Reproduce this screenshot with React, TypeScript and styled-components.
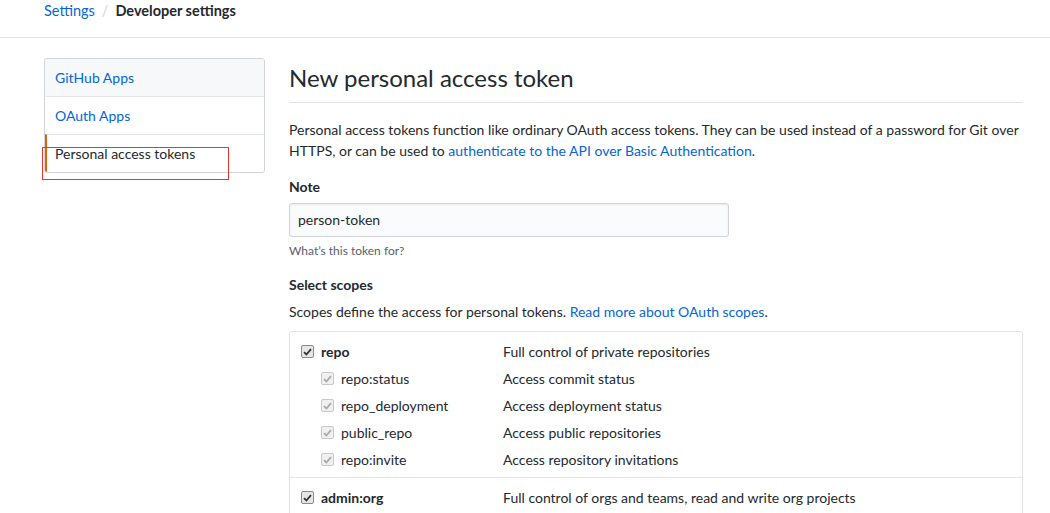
import React from "react";
import styled, { createGlobalStyle } from "styled-components";

const Global = createGlobalStyle`
  html, body { margin: 0; padding: 0; background: #fff; }
  body {
    font-family: "Segoe UI", Lato, "Liberation Sans", sans-serif;
    font-size: 14px;
    line-height: 1.5;
    color: #24292e;
    overflow: hidden;
  }
  * { box-sizing: border-box; }
`;

const Page = styled.div`
  width: 1050px;
  height: 513px;
  position: relative;
  overflow: hidden;
`;

const Header = styled.div`
  height: 38px;
  border-bottom: 1px solid #e1e4e8;
  padding-left: 44px;
  display: flex;
  align-items: flex-start;
`;

const Crumbs = styled.div`
  display: flex;
  align-items: center;
  font-size: 14.5px;
  line-height: 22px;
`;

const Crumb = styled.a<{ $current?: boolean }>`
  color: ${(p) => (p.$current ? "#24292e" : "#0366d6")};
  font-weight: ${(p) => (p.$current ? 700 : 400)};
  text-decoration: none;
`;

const Sep = styled.span`
  color: #d1d5da;
  margin: 0 7px;
`;

const Body = styled.div`
  display: flex;
  gap: 24px;
  padding: 20px 0 0 44px;
`;

const SideNav = styled.nav`
  width: 221px;
  flex: none;
  border: 1px solid #d1d5da;
  border-radius: 3px;
  align-self: flex-start;
  overflow: hidden;
`;

const NavItem = styled.a<{ $selected?: boolean; $hover?: boolean }>`
  display: block;
  height: 38px;
  line-height: 37px;
  padding: 0 8px;
  font-size: 14px;
  text-decoration: none;
  color: ${(p) => (p.$selected ? "#24292e" : "#0366d6")};
  background: ${(p) => (p.$hover ? "#f6f8fa" : "#fff")};
  border-top: 1px solid #e1e4e8;
  border-left: 2px solid ${(p) => (p.$selected ? "#e36209" : "transparent")};
  &:first-child { border-top: 0; height: 37px; }
`;

const Main = styled.main`
  width: 734px;
  flex: none;
`;

const Title = styled.h2`
  margin: 0;
  font-size: 24px;
  font-weight: 400;
  line-height: 36px;
  padding: 2px 0 6px;
  border-bottom: 1px solid #e1e4e8;
`;

const Lead = styled.p`
  margin: 16px 0 0;
  font-size: 14px;
  line-height: 21px;
`;

const Link = styled.a`
  color: #0366d6;
  text-decoration: none;
`;

const Label = styled.div<{ $gap: number }>`
  margin-top: ${(p) => p.$gap}px;
  font-weight: 700;
  line-height: 21px;
`;

const Input = styled.div`
  margin-top: 6px;
  width: 440px;
  height: 34px;
  border: 1px solid #d1d5da;
  border-radius: 3px;
  background: #fafbfc;
  box-shadow: inset 0 1px 2px rgba(27, 31, 35, 0.075);
  padding: 0 8px;
  line-height: 32px;
  font-size: 14px;
`;

const Hint = styled.div`
  margin-top: 5px;
  font-size: 12px;
  color: #586069;
  line-height: 18px;
`;

const Note = styled.p`
  margin: 6px 0 0;
  line-height: 21px;
`;

const ScopeBox = styled.div`
  margin-top: 9px;
  border: 1px solid #e1e4e8;
  border-radius: 3px;
`;

const Group = styled.div`
  padding: 6px 0 4px 11px;
  & + & { border-top: 1px solid #e1e4e8; }
`;

const Row = styled.div<{ $sub?: boolean }>`
  display: flex;
  align-items: center;
  height: 27px;
  padding-left: ${(p) => (p.$sub ? "20px" : "0")};
`;

const Name = styled.span<{ $sub?: boolean }>`
  width: ${(p) => (p.$sub ? "162px" : "182px")};
  font-weight: ${(p) => (p.$sub ? 400 : 700)};
  margin-left: 7px;
`;

const Desc = styled.span`
  color: #24292e;
`;

const Box = styled.span<{ $disabled?: boolean }>`
  width: 13px;
  height: 13px;
  flex: none;
  border: 1px solid ${(p) => (p.$disabled ? "#c8c8c8" : "#8a8a8a")};
  border-radius: 2px;
  background: ${(p) => (p.$disabled ? "#f0f0f0" : "#e6e6e6")};
  display: inline-flex;
  align-items: center;
  justify-content: center;
`;

const Check = ({ disabled }: { disabled?: boolean }) => (
  <Box $disabled={disabled}>
    <svg width="9" height="8" viewBox="0 0 9 8">
      <path
        d="M1 4.2 L3.4 6.5 L8 1.2"
        fill="none"
        stroke={disabled ? "#a9a9a9" : "#333"}
        strokeWidth="1.8"
      />
    </svg>
  </Box>
);

const Annotation = styled.div`
  position: absolute;
  left: 42px;
  top: 147px;
  width: 187px;
  height: 33px;
  border: 1px solid #e8352e;
  pointer-events: none;
`;

const repoSubs = [
  ["repo:status", "Access commit status"],
  ["repo_deployment", "Access deployment status"],
  ["public_repo", "Access public repositories"],
  ["repo:invite", "Access repository invitations"],
];

export default function App() {
  return (
    <Page>
      <Global />
      <Header>
        <Crumbs>
          <Crumb href="#">Settings</Crumb>
          <Sep>/</Sep>
          <Crumb $current>Developer settings</Crumb>
        </Crumbs>
      </Header>
      <Body>
        <SideNav>
          <NavItem href="#" $hover>GitHub Apps</NavItem>
          <NavItem href="#">OAuth Apps</NavItem>
          <NavItem href="#" $selected>Personal access tokens</NavItem>
        </SideNav>
        <Main>
          <Title>New personal access token</Title>
          <Lead>
            Personal access tokens function like ordinary OAuth access tokens. They can be used instead of a password for Git over
            HTTPS, or can be used to <Link href="#">authenticate to the API over Basic Authentication</Link>.
          </Lead>
          <Label $gap={15}>Note</Label>
          <Input>person-token</Input>
          <Hint>What’s this token for?</Hint>
          <Label $gap={14}>Select scopes</Label>
          <Note>
            Scopes define the access for personal tokens. <Link href="#">Read more about OAuth scopes</Link>.
          </Note>
          <ScopeBox>
            <Group>
              <Row>
                <Check />
                <Name>repo</Name>
                <Desc>Full control of private repositories</Desc>
              </Row>
              {repoSubs.map(([n, d]) => (
                <Row $sub key={n}>
                  <Check disabled />
                  <Name $sub>{n}</Name>
                  <Desc>{d}</Desc>
                </Row>
              ))}
            </Group>
            <Group>
              <Row>
                <Check />
                <Name>admin:org</Name>
                <Desc>Full control of orgs and teams, read and write org projects</Desc>
              </Row>
            </Group>
          </ScopeBox>
        </Main>
      </Body>
      <Annotation />
    </Page>
  );
}
